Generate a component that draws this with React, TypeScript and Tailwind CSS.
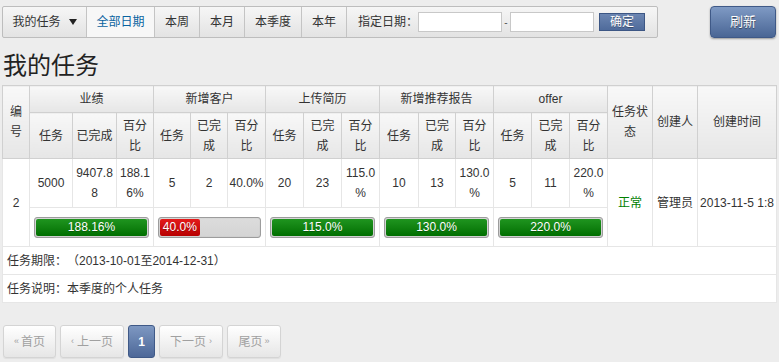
import React from "react";

type Group = {
    name: string;
    task: string;
    done: string;
    pct: string;
    val: number;
};

const groups: Group[] = [
    { name: "业绩", task: "5000", done: "9407.88", pct: "188.16%", val: 188.16 },
    { name: "新增客户", task: "5", done: "2", pct: "40.0%", val: 40 },
    { name: "上传简历", task: "20", done: "23", pct: "115.0%", val: 115 },
    { name: "新增推荐报告", task: "10", done: "13", pct: "130.0%", val: 130 },
    { name: "offer", task: "5", done: "11", pct: "220.0%", val: 220 },
];

// column widths, 2px .. 776px
const cols = [27, 43, 44, 37, 37, 37, 38, 38, 38, 38, 39, 37, 38, 38, 38, 38, 45, 45, 79];

const th =
    "border border-[#d0d0d0] bg-linear-to-b from-[#f8f8f8] to-[#e6e6e6] px-[2px] text-center align-middle text-[12px] font-normal leading-[20px] text-[#333]";
const td =
    "border border-[#e6e6e6] bg-white px-[1px] text-center align-middle text-[12px] leading-[20px] text-[#333] [line-break:anywhere]";

const Bar: React.FC<{ val: number; label: string }> = ({ val, label }) => {
    const red = val < 100;
    return (
        <div className="mx-[4px] h-[21px] rounded-[3px] border border-[#9c9c9c] bg-linear-to-b from-[#dcdcdc] to-[#d4d4d4] p-[1px] shadow-[inset_0_0_1px_rgba(0,0,0,0.2)]">
            <div
                className={
                    red
                        ? "flex h-full items-center justify-center rounded-[2px] bg-linear-to-b from-[#e41a1a] to-[#b80000] text-[12px] text-white"
                        : "flex h-full items-center justify-center rounded-[2px] bg-linear-to-b from-[#1f951f] to-[#006f00] text-[12px] text-white"
                }
                style={{ width: `${Math.min(val, 100)}%` }}
            >
                <span className="[text-shadow:0_1px_0_rgba(0,0,0,0.25)]">{label}</span>
            </div>
        </div>
    );
};

const Triangle = () => (
    <svg width="8" height="6" viewBox="0 0 8 6" className="ml-[8px]">
        <path d="M0 0H8L4 6Z" fill="#222" />
    </svg>
);

const PageBtn: React.FC<{ w: string; children: React.ReactNode }> = ({ w, children }) => (
    <div
        className={`${w} flex h-[33px] items-center justify-center rounded-[3px] border border-[#d4d4d4] bg-linear-to-b from-[#ffffff] to-[#e6e6e6] text-[12px] text-[#a0a0a0] shadow-[0_1px_1px_rgba(0,0,0,0.06)]`}
    >
        {children}
    </div>
);

export default function App() {
    return (
        <div className="h-[362px] w-[779px] overflow-hidden bg-[#ededed] font-['Liberation_Sans','Noto_Sans_CJK_SC',sans-serif] text-[#333] [text-spacing-trim:space-all]">
            {/* top bar */}
            <div className="flex items-start justify-between pl-[2px] pr-[3px] pt-[6px]">
                <div className="flex h-[32px] w-[656px] items-stretch rounded-[2px] border border-[#bdbdbd] bg-linear-to-b from-[#f6f6f6] to-[#e3e3e3] text-[12px] text-[#333]">
                    <div className="flex w-[84px] items-center justify-center border-r border-[#c4c4c4]">
                        我的任务
                        <Triangle />
                    </div>
                    <div className="flex w-[68px] items-center justify-center border-r border-[#c4c4c4] bg-[#f7f7f7] text-[#0a63a0]">
                        全部日期
                    </div>
                    <div className="flex w-[45px] items-center justify-center border-r border-[#c4c4c4]">本周</div>
                    <div className="flex w-[45px] items-center justify-center border-r border-[#c4c4c4]">本月</div>
                    <div className="flex w-[57px] items-center justify-center border-r border-[#c4c4c4]">本季度</div>
                    <div className="flex w-[45px] items-center justify-center border-r border-[#c4c4c4]">本年</div>
                    <div className="flex flex-1 items-center pl-[11px]">
                        <span className="w-[60px] whitespace-nowrap">指定日期：</span>
                        <div className="h-[20px] w-[84px] border border-[#c8c8c8] bg-white" />
                        <span className="w-[8px] text-center text-[10px] text-[#555]">-</span>
                        <div className="h-[20px] w-[84px] border border-[#c8c8c8] bg-white" />
                        <div className="ml-[5px] flex h-[18px] w-[46px] items-center justify-center border border-[#3c5684] bg-linear-to-b from-[#6c86b2] to-[#4f6b9b] text-[12px] text-white [text-shadow:0_1px_0_rgba(0,0,0,0.35)]">
                            确定
                        </div>
                    </div>
                </div>
                <div className="flex h-[32px] w-[66px] items-center justify-center rounded-[4px] border border-[#3f5987] bg-linear-to-b from-[#7f9ac4] to-[#4a6695] text-[13px] text-white shadow-[0_1px_2px_rgba(0,0,0,0.35)] [text-shadow:0_1px_1px_rgba(0,0,0,0.5)]">
                    刷新
                </div>
            </div>

            {/* title */}
            <div className="h-[47px] pl-[3px] pt-[15px] font-['Liberation_Serif','Noto_Sans_CJK_SC',serif] text-[24px] leading-[26px] text-[#222]">
                我的任务
            </div>

            {/* table */}
            <div className="pl-[2px]">
                <table className="w-[774px] table-fixed border-collapse border border-[#c8c8c8] bg-white">
                    <colgroup>
                        {cols.map((w, i) => (
                            <col key={i} style={{ width: w }} />
                        ))}
                    </colgroup>
                    <thead>
                        <tr className="h-[27px]">
                            <th rowSpan={2} className={th}>
                                编号
                            </th>
                            {groups.map((g) => (
                                <th key={g.name} colSpan={3} className={th}>
                                    {g.name}
                                </th>
                            ))}
                            <th rowSpan={2} className={th}>
                                任务状态
                            </th>
                            <th rowSpan={2} className={th}>
                                创建人
                            </th>
                            <th rowSpan={2} className={th}>
                                创建时间
                            </th>
                        </tr>
                        <tr className="h-[46px]">
                            {groups.map((g) => (
                                <React.Fragment key={g.name}>
                                    <th className={th}>任务</th>
                                    <th className={th}>已完成</th>
                                    <th className={th}>百分比</th>
                                </React.Fragment>
                            ))}
                        </tr>
                    </thead>
                    <tbody>
                        <tr className="h-[49px]">
                            <td rowSpan={2} className={td}>
                                2
                            </td>
                            {groups.map((g) => (
                                <React.Fragment key={g.name}>
                                    <td className={td}>{g.task}</td>
                                    <td className={td}>{g.done}</td>
                                    <td className={td}>{g.pct}</td>
                                </React.Fragment>
                            ))}
                            <td rowSpan={2} className={`${td} text-[#008000]`}>
                                正常
                            </td>
                            <td rowSpan={2} className={td}>
                                管理员
                            </td>
                            <td rowSpan={2} className={`${td} overflow-hidden whitespace-nowrap`}>
                                2013-11-5 1:8
                            </td>
                        </tr>
                        <tr className="h-[39px]">
                            {groups.map((g) => (
                                <td key={g.name} colSpan={3} className="border border-[#e6e6e6] bg-white p-0 align-middle">
                                    <Bar val={g.val} label={g.pct} />
                                </td>
                            ))}
                        </tr>
                        <tr className="h-[28px]">
                            <td colSpan={19} className="border border-[#e6e6e6] bg-white pl-[4px] text-left align-middle text-[12px] text-[#333]">
                                任务期限：（2013-10-01至2014-12-31）
                            </td>
                        </tr>
                        <tr className="h-[28px]">
                            <td colSpan={19} className="border border-[#e6e6e6] bg-white pl-[4px] text-left align-middle text-[12px] text-[#333]">
                                任务说明：本季度的个人任务
                            </td>
                        </tr>
                    </tbody>
                </table>
            </div>

            {/* pager */}
            <div className="mt-[22px] flex gap-[4px] pl-[3px]">
                <PageBtn w="w-[53px]">
                    <span className="mr-[2px] text-[9px]">«</span>首页
                </PageBtn>
                <PageBtn w="w-[64px]">
                    <span className="mr-[3px] text-[9px]">‹</span>上一页
                </PageBtn>
                <div className="flex h-[33px] w-[27px] items-center justify-center rounded-[3px] border border-[#3f5987] bg-linear-to-b from-[#7e98c2] to-[#4d6898] text-[12px] font-bold text-white">
                    1
                </div>
                <PageBtn w="w-[64px]">
                    下一页<span className="ml-[3px] text-[9px]">›</span>
                </PageBtn>
                <PageBtn w="w-[54px]">
                    尾页<span className="ml-[2px] text-[9px]">»</span>
                </PageBtn>
            </div>
        </div>
    );
}
